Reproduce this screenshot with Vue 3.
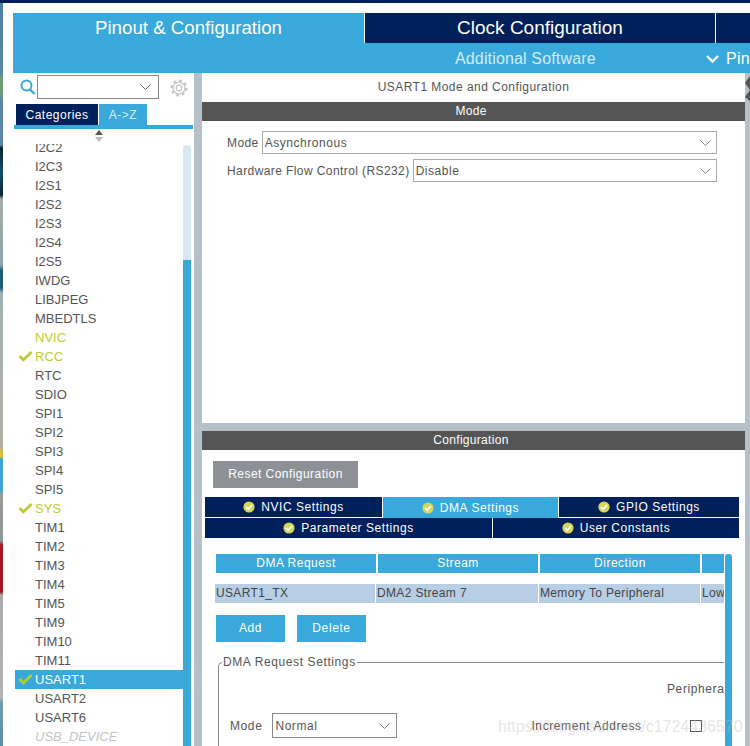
<template>
  <div class="page">
    <div class="top-strip"></div>
    <div class="window-row">
      <div class="desk"></div>
      <div class="window">
        <div class="white-gap"></div>
        <div class="tabs-main">
          <div class="tab-main active">Pinout &amp; Configuration</div>
          <div class="tab-main clock">Clock Configuration</div>
          <div class="tab-main rest"></div>
        </div>
        <div class="sub-bar">
          <div class="sub-title">Additional Software</div>
          <svg class="sub-chevron" width="15" height="10" viewBox="0 0 15 10">
            <path d="M2 2 L7.5 7.5 L13 2" fill="none" stroke="#fff" stroke-width="2.4" />
          </svg>
          <div class="sub-pin">Pinout</div>
        </div>

        <div class="body">
          <aside class="side">
            <div class="search-row">
              <svg class="search-icon" width="16" height="17" viewBox="0 0 16 17">
                <circle cx="6.5" cy="6.5" r="5" fill="none" stroke="#39a9dc" stroke-width="2" />
                <path d="M10 10.5 L14.5 15" stroke="#39a9dc" stroke-width="2.4" />
              </svg>
              <div class="search-box">
                <svg width="13" height="8" viewBox="0 0 13 8">
                  <path d="M1.5 1.5 L6.5 6.5 L11.5 1.5" fill="none" stroke="#666" stroke-width="1" />
                </svg>
              </div>
              <svg class="gear" width="18" height="18" viewBox="0 0 18 18">
                <circle cx="9" cy="9" r="6" fill="none" stroke="#c4c4c4" stroke-width="1.2" />
                <circle cx="9" cy="9" r="2.8" fill="none" stroke="#c4c4c4" stroke-width="1.2" />
                <circle cx="9" cy="9" r="7.4" fill="none" stroke="#c4c4c4" stroke-width="2.2" stroke-dasharray="2.6 3.2" />
              </svg>
            </div>
            <div class="side-tabs">
              <div class="side-tab navy">Categories</div>
              <div class="side-tab blue">A-&gt;Z</div>
            </div>
            <div class="side-line"></div>
            <div class="sorter">
              <svg width="10" height="14" viewBox="0 0 10 14">
                <path d="M5 1 L9 6 L1 6 Z" fill="#555" />
                <path d="M5 13 L9 8 L1 8 Z" fill="#bbb" />
              </svg>
            </div>
            <div class="list-area">
              <div class="list">
                <div
                  v-for="item in items"
                  :key="item.name"
                  class="row"
                  :class="[item.kind, { selected: item.selected }]"
                >
                  <svg v-if="item.check" class="row-check" width="15" height="12" viewBox="0 0 15 12">
                    <path d="M1.5 6 L5.5 10 L13.5 2" fill="none" stroke="#b4cf2c" stroke-width="2.6" />
                  </svg>
                  <span>{{ item.name }}</span>
                </div>
              </div>
              <div class="side-scroll">
                <div class="side-track"></div>
                <div class="side-thumb"></div>
              </div>
            </div>
          </aside>
          <div class="divider"></div>

          <main class="content">
            <section class="mode-panel">
              <div class="panel-title">USART1 Mode and Configuration</div>
              <div class="bar">Mode</div>
              <div class="form">
                <div class="form-row">
                  <label>Mode</label>
                  <div class="select">
                    <span>Asynchronous</span>
                    <svg width="13" height="8" viewBox="0 0 13 8"><path d="M1.5 1.5 L6.5 6.5 L11.5 1.5" fill="none" stroke="#888" /></svg>
                  </div>
                </div>
                <div class="form-row">
                  <label>Hardware Flow Control (RS232)</label>
                  <div class="select">
                    <span>Disable</span>
                    <svg width="13" height="8" viewBox="0 0 13 8"><path d="M1.5 1.5 L6.5 6.5 L11.5 1.5" fill="none" stroke="#888" /></svg>
                  </div>
                </div>
              </div>
            </section>
            <div class="h-divider"></div>

            <section class="config-panel">
              <div class="bar">Configuration</div>
              <div class="reset">Reset Configuration</div>
              <div class="cfg-tabs">
                <div class="cfg-row first">
                  <div v-for="t in tabsOne" :key="t.label" class="cfg-tab" :class="{ on: t.on }" :style="{ width: t.width + 'px' }">
                    <svg width="12" height="12" viewBox="0 0 12 12">
                      <circle cx="6" cy="6" r="5.6" fill="#d6d65a" />
                      <path d="M3 6 L5.2 8.2 L9 4" fill="none" stroke="#fff" stroke-width="1.7" />
                    </svg>
                    <span>{{ t.label }}</span>
                  </div>
                </div>
                <div class="cfg-row">
                  <div v-for="t in tabsTwo" :key="t.label" class="cfg-tab" :style="{ width: t.width + 'px' }">
                    <svg width="12" height="12" viewBox="0 0 12 12">
                      <circle cx="6" cy="6" r="5.6" fill="#d6d65a" />
                      <path d="M3 6 L5.2 8.2 L9 4" fill="none" stroke="#fff" stroke-width="1.7" />
                    </svg>
                    <span>{{ t.label }}</span>
                  </div>
                </div>
              </div>

              <div class="dma-area">
                <div class="dma-scroll">
                  <div class="dma-head">
                    <div>DMA Request</div>
                    <div>Stream</div>
                    <div>Direction</div>
                    <div></div>
                  </div>
                  <div class="dma-data">
                    <div>USART1_TX</div>
                    <div>DMA2 Stream 7</div>
                    <div>Memory To Peripheral</div>
                    <div>Low</div>
                  </div>
                  <div class="dma-btns">
                    <div class="btn">Add</div>
                    <div class="btn">Delete</div>
                  </div>
                  <fieldset class="dma-set">
                    <legend>DMA Request Settings</legend>
                    <div class="peripheral">Peripheral</div>
                    <div class="set-row">
                      <label>Mode</label>
                      <div class="select small">
                        <span>Normal</span>
                        <svg width="13" height="8" viewBox="0 0 13 8"><path d="M1.5 1.5 L6.5 6.5 L11.5 1.5" fill="none" stroke="#777" /></svg>
                      </div>
                      <label class="incr">Increment Address</label>
                      <div class="checkbox"></div>
                    </div>
                  </fieldset>
                </div>
                <div class="dma-bar"></div>
              </div>
            </section>
          </main>

          <div class="edge">
            <svg width="5" height="30" viewBox="0 0 5 30">
              <path d="M5 3 L0 10 L5 17 L0 24 L5 28 Z" fill="#555" />
            </svg>
          </div>
        </div>
      </div>
    </div>
    <div class="watermark">https://blog.csdn.net/c1724436570</div>
  </div>
</template>

<script setup>
const names = [
  "I2C2", "I2C3", "I2S1", "I2S2", "I2S3", "I2S4", "I2S5", "IWDG", "LIBJPEG", "MBEDTLS",
  "NVIC", "RCC", "RTC", "SDIO", "SPI1", "SPI2", "SPI3", "SPI4", "SPI5", "SYS",
  "TIM1", "TIM2", "TIM3", "TIM4", "TIM5", "TIM9", "TIM10", "TIM11", "USART1", "USART2",
  "USART6", "USB_DEVICE",
];

const items = names.map((name) => ({
  name,
  kind: ["NVIC", "RCC", "SYS"].includes(name) ? "warn" : name === "USB_DEVICE" ? "off" : "",
  check: ["RCC", "SYS", "USART1"].includes(name),
  selected: name === "USART1",
}));

const tabsOne = [
  { label: "NVIC Settings", width: 177 },
  { label: "DMA Settings", width: 175, on: true },
  { label: "GPIO Settings", width: 180 },
];

const tabsTwo = [
  { label: "Parameter Settings", width: 287 },
  { label: "User Constants", width: 246 },
];
</script>

<style scoped>
.page {
  position: relative;
  width: 750px;
  height: 746px;
  overflow: hidden;
  background: #fff;
  font-family: "Liberation Sans", Arial, sans-serif;
  color: #555;
}

.top-strip {
  height: 3px;
  background: #00205c;
}

.window-row {
  display: flex;
  height: 743px;
}

/* sliver of the desktop wallpaper left of the window */
.desk {
  width: 3px;
  flex: none;
  margin-right: 10px;
  background: linear-gradient(
    to bottom,
    #4f7fa6 0,
    #5b86a8 70px,
    #6f9a72 75px,
    #6f9a72 90px,
    #5b86a8 97px,
    #5b86a8 142px,
    #0c2433 145px,
    #14506e 170px,
    #0c2433 192px,
    #a7aea6 196px,
    #8ba5ad 262px,
    #1d5a74 268px,
    #1d5a74 285px,
    #9fb3b4 290px,
    #b3aea2 445px,
    #dcbc38 448px,
    #dcbc38 454px,
    #3fa6d2 456px,
    #3fa6d2 486px,
    #9a9a92 492px,
    #8d979c 538px,
    #a21a22 542px,
    #a21a22 589px,
    #a8aba6 592px,
    #b0b6b2 695px,
    #6f9bb0 700px,
    #5c8ea5 743px
  );
}

.window {
  width: 737px;
  flex: none;
  display: flex;
  flex-direction: column;
}

.white-gap {
  height: 10px;
  flex: none;
}

.tabs-main {
  display: flex;
  height: 30px;
  flex: none;
}

.tab-main {
  display: flex;
  align-items: center;
  justify-content: center;
  font-size: 19px;
  color: #fff;
  background: #00205c;
}

.tab-main.active {
  width: 351px;
  background: #39a9dc;
  margin-right: 1px;
  font-size: 18.7px;
}

.tab-main.clock {
  width: 350px;
  margin-right: 1px;
}

.tab-main.rest {
  flex: 1;
}

.sub-bar {
  display: flex;
  align-items: center;
  height: 30px;
  flex: none;
  padding-top: 1px;
  box-sizing: border-box;
  background: #39a9dc;
  color: #fff;
}

.sub-title {
  margin-left: 442px;
  width: 140px;
  flex: none;
  font-size: 16px;
  letter-spacing: 0.15px;
  white-space: nowrap;
  color: #d3ecf8;
}

.sub-chevron {
  margin-left: 110px;
  flex: none;
}

.sub-pin {
  margin-left: 6px;
  font-size: 16px;
  white-space: nowrap;
  letter-spacing: 0.3px;
}

.body {
  display: flex;
  flex: 1;
  min-height: 0;
}

.side {
  width: 181px;
  flex: none;
  display: flex;
  flex-direction: column;
  background: #fff;
}

.search-row {
  display: flex;
  align-items: flex-start;
  height: 31px;
  flex: none;
  padding-left: 7px;
}

.search-icon {
  margin-top: 6px;
  flex: none;
}

.search-box {
  width: 114px;
  height: 22px;
  margin-top: 2px;
  margin-left: 1px;
  border: 1px solid #8a8a8a;
  display: flex;
  align-items: center;
  justify-content: flex-end;
  padding-right: 6px;
  flex: none;
}

.gear {
  margin: 6px 0 0 11px;
  flex: none;
}

.side-tabs {
  display: flex;
  height: 21px;
  flex: none;
  margin-left: 3px;
  gap: 1px;
}

.side-tab {
  display: flex;
  align-items: center;
  justify-content: center;
  font-size: 12px;
  letter-spacing: 0.5px;
  color: #fff;
}

.side-tab.navy {
  width: 82px;
  background: #00205c;
}

.side-tab.blue {
  width: 48px;
  background: #39a9dc;
  color: #d6eef9;
}

.side-line {
  height: 4px;
  flex: none;
  margin: 0 1px;
  background: #39a9dc;
}

.sorter {
  height: 15px;
  flex: none;
  display: flex;
  justify-content: center;
  margin-left: -10px;
}

.list-area {
  flex: 1;
  min-height: 0;
  display: flex;
  overflow: hidden;
  padding-left: 2px;
}

.list {
  width: 168px;
  flex: none;
  margin-top: -6px;
}

.row {
  position: relative;
  height: 19px;
  line-height: 19px;
  padding-left: 20px;
  font-size: 13px;
  color: #555;
  white-space: nowrap;
}

.row.warn {
  color: #b9d031;
}

.row.off {
  color: #c4c4c4;
  font-style: italic;
}

.row.selected {
  background: #39a9dc;
  color: #fff;
}

.row-check {
  position: absolute;
  left: 3px;
  top: 3px;
}

.side-scroll {
  width: 8px;
  flex: none;
  display: flex;
  flex-direction: column;
  margin-top: 1px;
}

.side-track {
  height: 115px;
  flex: none;
  background: #d8e8f3;
  border-radius: 4px 4px 0 0;
}

.side-thumb {
  flex: 1;
  background: #39a9dc;
}

.divider {
  width: 8px;
  flex: none;
  background: #b5c0c8;
}

.content {
  width: 543px;
  flex: none;
  display: flex;
  flex-direction: column;
}

.mode-panel {
  height: 350px;
  flex: none;
}

.panel-title {
  height: 29px;
  line-height: 29px;
  text-align: center;
  font-size: 12px;
  letter-spacing: 0.45px;
}

.bar {
  height: 19px;
  line-height: 19px;
  padding-right: 5px;
  background: #555;
  color: #fff;
  text-align: center;
  font-size: 12px;
  letter-spacing: 0.3px;
}

.form {
  padding: 10px 28px 0 25px;
  display: flex;
  flex-direction: column;
  gap: 5px;
}

.form-row {
  display: flex;
  align-items: center;
  gap: 3px;
  height: 23px;
  font-size: 12px;
  letter-spacing: 0.41px;
}

.select {
  flex: 1;
  height: 23px;
  box-sizing: border-box;
  border: 1px solid #aaa;
  display: flex;
  align-items: center;
  justify-content: space-between;
  padding: 0 4px 0 2px;
  font-size: 12px;
  letter-spacing: 0.55px;
}

.h-divider {
  height: 8px;
  flex: none;
  background: #b5c0c8;
}

.config-panel {
  flex: 1;
  min-height: 0;
  display: flex;
  flex-direction: column;
}

.reset {
  width: 145px;
  height: 27px;
  line-height: 27px;
  margin: 11px 0 0 11px;
  background: #8d9196;
  color: #fff;
  text-align: center;
  font-size: 12px;
  letter-spacing: 0.45px;
  flex: none;
}

.cfg-tabs {
  margin: 9px 0 0 3px;
  flex: none;
}

.cfg-row {
  display: flex;
  gap: 1px;
  height: 20px;
}

.cfg-row.first {
  margin-bottom: 1px;
}

.cfg-tab {
  display: flex;
  align-items: center;
  justify-content: center;
  gap: 6px;
  background: #00205c;
  color: #fff;
  font-size: 12px;
  letter-spacing: 0.55px;
}

.cfg-tab.on {
  background: #39a9dc;
  height: 21px;
}

.dma-area {
  display: flex;
  flex: 1;
  min-height: 0;
  margin: 16px 0 0 13px;
}

.dma-scroll {
  width: 509px;
  flex: none;
  overflow: hidden;
}

.dma-head,
.dma-data {
  display: grid;
  font-size: 12px;
}

.dma-head {
  height: 19px;
  line-height: 19px;
  margin-left: 1px;
  grid-template-columns: 160px 160px 160px 30px;
  column-gap: 2px;
  letter-spacing: 0.5px;
  color: #fff;
  text-align: center;
}

.dma-head > div {
  background: #39a9dc;
}

.dma-data {
  height: 19px;
  line-height: 19px;
  margin-top: 11px;
  grid-template-columns: 160px 162px 161px 24px;
  column-gap: 1px;
  letter-spacing: 0.35px;
  color: #444;
}

.dma-data > div {
  background: #b8cee4;
  overflow: hidden;
  white-space: nowrap;
  padding-left: 1px;
}

.dma-btns {
  display: flex;
  gap: 12px;
  margin: 12px 0 0 1px;
}

.btn {
  width: 69px;
  height: 27px;
  line-height: 27px;
  background: #39a9dc;
  color: #fff;
  text-align: center;
  font-size: 12px;
  letter-spacing: 0.6px;
}

.dma-set {
  margin: 13px -10px 0 3px;
  padding: 0 0 0 11px;
  border: 1px solid #888;
  border-right: 0;
  border-radius: 5px 0 0 0;
  font-size: 12px;
  letter-spacing: 0.6px;
  height: 120px;
  box-sizing: border-box;
}

.dma-set legend {
  margin-left: -8px;
  padding: 0 1px;
  font-size: 12px;
}

.peripheral {
  margin: 13px 0 0 437px;
  white-space: nowrap;
  height: 14px;
}

.set-row {
  display: flex;
  align-items: center;
  height: 25px;
  margin-top: 17px;
  white-space: nowrap;
}

.select.small {
  flex: none;
  width: 125px;
  height: 25px;
  margin-left: 10px;
  border-color: #888;
  padding: 0 5px 0 2px;
}

.incr {
  margin-left: 134px;
}

.checkbox {
  width: 10px;
  height: 10px;
  margin-left: 48px;
  border: 1px solid #555;
}

.dma-bar {
  width: 7px;
  flex: none;
  margin-left: 1px;
  background: #39a9dc;
  border-radius: 3px 3px 0 0;
}

.edge {
  width: 5px;
  flex: none;
  background: #b5c0c8;
  line-height: 0;
}

.watermark {
  position: absolute;
  left: 498px;
  top: 718px;
  font-size: 16px;
  white-space: nowrap;
  color: rgba(190, 190, 190, 0.4);
  pointer-events: none;
}
</style>
